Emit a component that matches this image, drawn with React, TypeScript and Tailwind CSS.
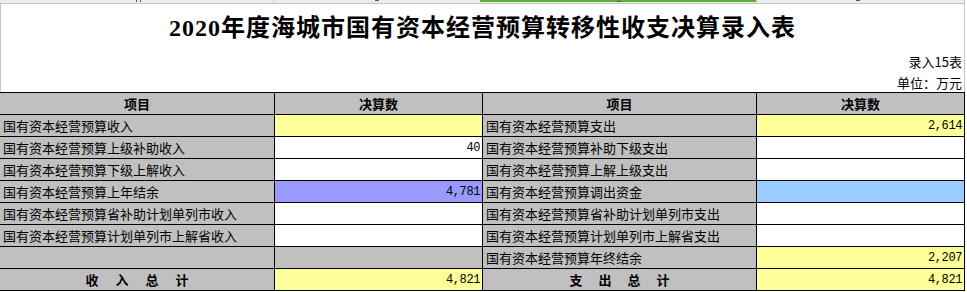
import React from "react";

type Cell = { value?: string; bg: string };
type Row = { left: string; lv: Cell; right: string; rv: Cell };

const YELLOW = "bg-[#ffff99]";
const WHITE = "bg-white";
const GREY = "bg-[#c0c0c0]";

const ROWS: Row[] = [
  { left: "国有资本经营预算收入", lv: { bg: YELLOW }, right: "国有资本经营预算支出", rv: { value: "2,614", bg: YELLOW } },
  { left: "国有资本经营预算上级补助收入", lv: { value: "40", bg: WHITE }, right: "国有资本经营预算补助下级支出", rv: { bg: WHITE } },
  { left: "国有资本经营预算下级上解收入", lv: { bg: WHITE }, right: "国有资本经营预算上解上级支出", rv: { bg: WHITE } },
  { left: "国有资本经营预算上年结余", lv: { value: "4,781", bg: "bg-[#9999ff]" }, right: "国有资本经营预算调出资金", rv: { bg: "bg-[#99ccff]" } },
  { left: "国有资本经营预算省补助计划单列市收入", lv: { bg: WHITE }, right: "国有资本经营预算省补助计划单列市支出", rv: { bg: WHITE } },
  { left: "国有资本经营预算计划单列市上解省收入", lv: { bg: WHITE }, right: "国有资本经营预算计划单列市上解省支出", rv: { bg: WHITE } },
  { left: "", lv: { bg: GREY }, right: "国有资本经营预算年终结余", rv: { value: "2,207", bg: YELLOW } },
];

const CJK = "font-['Noto_Sans_CJK_SC',sans-serif]";

function Label({ text }: { text: string }) {
  return (
    <div className={`${GREY} h-[21px] flex items-center pl-[3px] text-[13px] leading-none text-black whitespace-nowrap`}>
      {text}
    </div>
  );
}

function Num({ cell }: { cell: Cell }) {
  return (
    <div
      className={`${cell.bg} h-[21px] flex items-center justify-end pr-[2px] font-['Liberation_Mono',monospace] text-[12px] tracking-[-0.4px] leading-none text-black`}
    >
      {cell.value}
    </div>
  );
}

export default function App() {
  return (
    <div className={`w-[967px] h-[292px] bg-white overflow-hidden ${CJK}`}>
      <div className="w-[965px]">
        {/* spreadsheet column header remnants */}
        <div className="relative h-[4px] bg-[#ececec] border-b border-[#c6c6c6] flex">
          <div className="w-[274px] border-r border-[#d4d4d4] relative">
            <span className="absolute left-[136px] top-0 w-px h-[2px] bg-[#555]" />
            <span className="absolute left-[140px] top-0 w-px h-[2px] bg-[#555]" />
          </div>
          <div className="w-[206px] relative">
            <span className="absolute left-[101px] top-0 w-[4px] h-px bg-[#555]" />
          </div>
          <div className="w-[277px] border-r border-[#d4d4d4] relative">
            <span className="absolute left-0 top-0 w-full h-[2px] bg-[#5fae3c]" />
            <span className="absolute left-[137px] top-[1px] w-[4px] h-px bg-[#555]" />
          </div>
          <div className="flex-1 border-r border-[#c6c6c6] relative">
            <span className="absolute left-[99px] top-0 w-[4px] h-px bg-[#555]" />
          </div>
        </div>

        {/* title area */}
        <div className="h-[88px] border-l border-r border-[#c6c6c6]">
          <div className="h-[48px] flex items-center justify-center">
            <h1 className="font-['Liberation_Serif','Noto_Sans_CJK_SC',serif] font-bold text-[24px] tracking-[1px] leading-none text-black">
              2020年度海城市国有资本经营预算转移性收支决算录入表
            </h1>
          </div>
          <div className="mt-[1px] h-[16px] flex items-center justify-end pr-[2px] text-[13px] leading-none text-black">
            录入15表
          </div>
          <div className="mt-[5px] h-[16px] flex items-center justify-end pr-[2px] text-[13px] leading-none text-black">
            单位：万元
          </div>
        </div>

        {/* table */}
        <div className="grid grid-cols-[274px_207px_273px_207px] gap-px bg-black border-t border-b border-r border-black">
          <div className={`${GREY} h-[21px] flex items-center justify-center text-[13px] font-bold leading-none`}>项目</div>
          <div className={`${GREY} h-[21px] flex items-center justify-center text-[13px] font-bold leading-none`}>决算数</div>
          <div className={`${GREY} h-[21px] flex items-center justify-center text-[13px] font-bold leading-none`}>项目</div>
          <div className={`${GREY} h-[21px] flex items-center justify-center text-[13px] font-bold leading-none`}>决算数</div>

          {ROWS.map((r, i) => (
            <React.Fragment key={i}>
              <Label text={r.left} />
              <Num cell={r.lv} />
              <Label text={r.right} />
              <Num cell={r.rv} />
            </React.Fragment>
          ))}

          <div className={`${GREY} h-[21px] flex items-center justify-center text-[13px] font-bold leading-none tracking-[17px] pl-[17px]`}>
            收入总计
          </div>
          <Num cell={{ value: "4,821", bg: YELLOW }} />
          <div className={`${GREY} h-[21px] flex items-center justify-center text-[13px] font-bold leading-none tracking-[16px] pl-[16px]`}>
            支出总计
          </div>
          <Num cell={{ value: "4,821", bg: YELLOW }} />
        </div>
      </div>
    </div>
  );
}
